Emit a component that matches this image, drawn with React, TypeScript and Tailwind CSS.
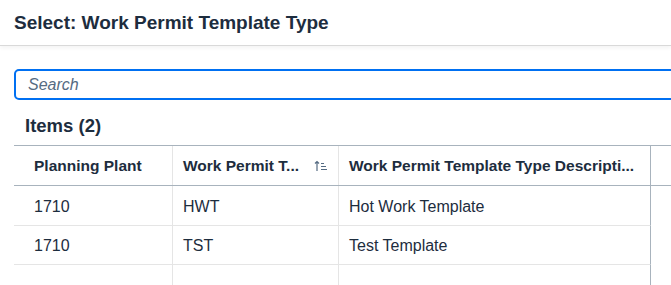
const rows = [
  { plant: "1710", type: "HWT", desc: "Hot Work Template", h: "h-[40px]" },
  { plant: "1710", type: "TST", desc: "Test Template", h: "h-[39px]" },
];

function SortAscIcon() {
  return (
    <svg width="14" height="12" viewBox="0 0 14 12" fill="none" className="text-[#556b82]">
      <path d="M3 11V1.5M1 3.5 3 1.5l2 2" stroke="currentColor" strokeWidth="1.2" />
      <path d="M7 3.5h3M7 6.5h5M7 9.5h6" stroke="currentColor" strokeWidth="1.1" />
    </svg>
  );
}

export default function App() {
  return (
    <div className="w-[671px] h-[285px] overflow-hidden bg-white text-[#1d2d3e] font-['Liberation_Sans',Arial,sans-serif]">
      {/* Dialog header */}
      <div className="h-[46px] flex items-center px-[14px] border-b border-[#d9d9d9] shadow-[0_2px_4px_rgba(0,0,0,0.05)]">
        <h1 className="text-[19px] font-bold leading-none">Select: Work Permit Template Type</h1>
      </div>

      <div className="pl-[14px]">
        {/* Search */}
        <div className="mt-[23px] w-[700px] h-[31px] flex items-center rounded-[5px] border-2 border-[#0070f2] pl-[12px]">
          <span className="text-[16px] italic text-[#556b82]">Search</span>
        </div>

        {/* Items title */}
        <div className="h-[45px] pt-[7px] flex items-center pl-[11px]">
          <span className="text-[18.5px] font-bold leading-none">Items (2)</span>
        </div>

        {/* Table */}
        <div className="w-[700px]">
          <div className="grid grid-cols-[159px_166px_312px_1fr] h-[41px] border-y border-[#a8b3bd] text-[15.5px] font-bold">
            <div className="flex items-center pl-[20px] border-r border-[#e5e5e5]">Planning Plant</div>
            <div className="flex items-center justify-between pl-[10px] pr-[10px] border-r border-[#e5e5e5]">
              <span>Work Permit T...</span>
              <SortAscIcon />
            </div>
            <div className="flex items-center pl-[10px] border-r border-[#a8b3bd]">
              Work Permit Template Type Descripti...
            </div>
            <div />
          </div>

          {rows.map((r) => (
            <div key={r.type} className={`grid grid-cols-[159px_166px_312px_1fr] ${r.h} text-[16px]`}>
              <div className="flex items-center pt-[2px] pl-[20px] border-r border-b border-[#e5e5e5]">{r.plant}</div>
              <div className="flex items-center pt-[2px] pl-[10px] border-r border-b border-[#e5e5e5]">{r.type}</div>
              <div className="flex items-center pt-[2px] pl-[10px] border-b border-[#e5e5e5] border-r border-r-[#a8b3bd]">{r.desc}</div>
              <div />
            </div>
          ))}

          <div className="grid grid-cols-[159px_166px_312px_1fr] h-[40px]">
            <div className="border-r border-[#e5e5e5]" />
            <div className="border-r border-[#e5e5e5]" />
            <div className="border-r border-[#a8b3bd]" />
            <div />
          </div>
        </div>
      </div>
    </div>
  );
}
